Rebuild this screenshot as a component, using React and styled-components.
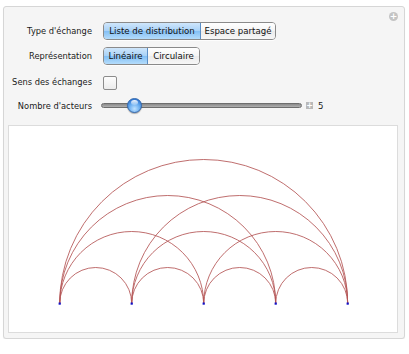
import React from "react";
import styled, { createGlobalStyle } from "styled-components";

const GlobalStyle = createGlobalStyle`
  body {
    margin: 0;
    background: #fff;
    font-family: "DejaVu Sans", "Liberation Sans", sans-serif;
  }
`;

const Page = styled.div`
  padding: 6px 0 0 3px;
`;

const Panel = styled.div`
  position: relative;
  width: 391px;
  padding: 14px 5px 5px 4px;
  background: #f5f5f5;
  border: 1px solid #d6d6d6;
  border-radius: 3px;
  box-shadow: 0 1px 1px rgba(0, 0, 0, 0.06);
`;

const AddButton = styled.div`
  position: absolute;
  top: 5px;
  right: 6px;
  width: 9px;
  height: 9px;
  border-radius: 50%;
  background: #c4c4c4;
  display: flex;
  align-items: center;
  justify-content: center;
  color: #fff;
  font-size: 9px;
  font-weight: bold;
  line-height: 1;
`;

const Controls = styled.div`
  display: grid;
  grid-template-columns: 84px 1fr;
  grid-template-rows: 20px 20px 22px 18px;
  column-gap: 11px;
  row-gap: 5px;
  & > :nth-child(n + 7) {
    margin-top: -3px;
  }
`;

const Label = styled.div`
  display: flex;
  align-items: center;
  justify-content: flex-end;
  font-size: 8.3px;
  color: #1a1a1a;
  white-space: nowrap;
`;

const Cell = styled.div`
  display: flex;
  align-items: center;
`;

const Segmented = styled.div`
  display: flex;
  height: 16px;
  border: 1px solid #8a8a8a;
  border-radius: 4px;
  overflow: hidden;
  box-shadow: 0 1px 0 rgba(255, 255, 255, 0.8);
`;

const Segment = styled.div`
  width: ${(p) => p.$w}px;
  display: flex;
  align-items: center;
  justify-content: center;
  font-size: 8.6px;
  color: #111;
  white-space: nowrap;
  background: ${(p) =>
    p.$active
      ? "linear-gradient(#cfe6fb 0%, #a7d1f7 50%, #82bff5 51%, #b4dcfb 100%)"
      : "linear-gradient(#ffffff 0%, #f4f4f4 50%, #ebebeb 51%, #f7f7f7 100%)"};
  border-right: 1px solid ${(p) => (p.$active ? "#5b8fc7" : "#a0a0a0")};
  &:last-child {
    border-right: none;
  }
`;

const Checkbox = styled.div`
  width: 12px;
  height: 12px;
  margin-top: 2px;
  border: 1px solid #8c8c8c;
  border-radius: 2px;
  background: linear-gradient(#fdfdfd, #ececec);
`;

const SliderRow = styled.div`
  display: flex;
  align-items: center;
`;

const Track = styled.div`
  position: relative;
  width: 199px;
  height: 3px;
  margin-left: -2px;
  border-radius: 3px;
  background: linear-gradient(#8a8a8a, #b0b0b0);
  border: 1px solid #6e6e6e;
`;

const Thumb = styled.div`
  position: absolute;
  left: ${(p) => p.$pos}px;
  top: 50%;
  width: 15px;
  height: 15px;
  margin: -7.5px 0 0 -7.5px;
  border-radius: 50%;
  border: 1px solid #3f6fae;
  box-sizing: border-box;
  background: radial-gradient(circle at 50% 75%, #bfe2ff 0%, #6aaef0 45%, #2f77d4 80%),
    #3b82e0;
  box-shadow: 0 1px 1px rgba(0, 0, 0, 0.3);
  &::after {
    content: "";
    position: absolute;
    left: 3px;
    top: 1px;
    width: 7px;
    height: 5px;
    border-radius: 50%;
    background: linear-gradient(rgba(255, 255, 255, 0.95), rgba(255, 255, 255, 0.2));
  }
`;

const PlusBox = styled.div`
  width: 7px;
  height: 7px;
  margin-left: 4px;
  background: #b9b9b9;
  color: #fff;
  font-size: 8px;
  line-height: 7px;
  text-align: center;
  font-weight: bold;
`;

const Value = styled.span`
  margin-left: 5px;
  font-size: 8.6px;
  color: #222;
`;

const Plot = styled.div`
  margin-top: 9px;
  width: 388px;
  height: 206px;
  background: #fff;
  border: 1px solid #dcdcdc;
`;

const nodes = [50.7, 122.7, 194.7, 266.7, 338.7];
const baseY = 177.5;

function Arcs() {
  const arcs = [];
  for (let i = 0; i < nodes.length; i++) {
    for (let j = i + 1; j < nodes.length; j++) {
      const r = (nodes[j] - nodes[i]) / 2;
      arcs.push(
        <path
          key={`${i}-${j}`}
          d={`M ${nodes[i]} ${baseY} A ${r} ${r} 0 0 1 ${nodes[j]} ${baseY}`}
          fill="none"
          stroke="#b35454"
          strokeWidth="0.85"
        />
      );
    }
  }
  return (
    <svg width="388" height="206" viewBox="0 0 388 206">
      {arcs}
      {nodes.map((x) => (
        <rect key={x} x={x - 1.1} y={baseY - 1} width="2.2" height="2.2" fill="#1010c8" />
      ))}
    </svg>
  );
}

const App = () => {
  return (
    <Page>
      <GlobalStyle />
      <Panel>
        <AddButton>+</AddButton>
        <Controls>
          <Label>Type d'échange</Label>
          <Cell>
            <Segmented>
              <Segment $w={96} $active>
                Liste de distribution
              </Segment>
              <Segment $w={74}>Espace partagé</Segment>
            </Segmented>
          </Cell>
          <Label>Représentation</Label>
          <Cell>
            <Segmented>
              <Segment $w={43} $active>
                Linéaire
              </Segment>
              <Segment $w={51}>Circulaire</Segment>
            </Segmented>
          </Cell>
          <Label>Sens des échanges</Label>
          <Cell>
            <Checkbox />
          </Cell>
          <Label>Nombre d'acteurs</Label>
          <SliderRow>
            <Track>
              <Thumb $pos={32} />
            </Track>
            <PlusBox>+</PlusBox>
            <Value>5</Value>
          </SliderRow>
        </Controls>
        <Plot>
          <Arcs />
        </Plot>
      </Panel>
    </Page>
  );
};

export default App;
